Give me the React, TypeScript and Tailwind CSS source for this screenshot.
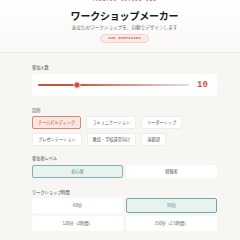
import React from "react";

const purposes = [
  "チームビルディング",
  "コミュニケーション",
  "リーダーシップ",
  "プレゼンテーション",
  "教員・学校運営向け",
  "演劇部",
];

const levels = ["初心者", "経験者"];
const durations = ["60分", "90分", "120分（2時間）", "150分（2.5時間）"];

export default function App() {
  const selectedPurpose = 0;
  const selectedLevel = 0;
  const selectedDuration = 1;

  return (
    <div
      className="w-[240px] h-[240px] overflow-hidden bg-[#f7f6f3] text-[#333]"
      style={{ fontFamily: '"Noto Sans CJK JP", "Noto Sans", sans-serif' }}
    >
      {/* Header */}
      <header className="bg-gradient-to-b from-white to-[#f9f8f6] border-b border-[#ebe8e3] h-[55px] pl-[9px] flex flex-col items-center -mt-[2px]">
        <div className="font-['Liberation_Mono',monospace] text-[4px] leading-[5px] tracking-[0.3em] text-[#c0574a] font-bold">
          THEATER METHOD LAB
        </div>
        <h1 className="mt-[7px] text-[10px] leading-[12px] font-bold text-[#1a1a1a] tracking-[-0.02em]">
          ワークショップメーカー
        </h1>
        <p className="mt-[2px] text-[4.6px] leading-[6px] text-[#666]">
          あなたのワークショップを、自動でデザインします
        </p>
        <span className="mt-[4px] px-[7px] h-[9px] flex items-center rounded-full bg-[#fbebe7] border border-[#f3d3cc] font-['Liberation_Mono',monospace] text-[4.2px] font-bold text-[#c0574a]">
          131 exercises
        </span>
      </header>

      <main className="pl-[32px] pr-[23px] pt-[12px] flex flex-col">
        {/* Participants */}
        <div className="text-[4.2px] leading-[5px] text-[#444]">参加人数</div>
        <div className="mt-[4px] h-[22px] bg-white rounded-[2px] flex items-center pl-[6px] pr-[8px] gap-[8px]">
          <div className="relative flex-1 h-[1.5px] rounded-full bg-gradient-to-r from-[#c8533f] from-[26%] to-[#dcdcdc] to-[98%]">
            <div className="absolute top-1/2 left-[26%] -translate-x-1/2 -translate-y-1/2 w-[5px] h-[5px] rounded-full bg-[#c8533f] ring-1 ring-[#f3cfc6]" />
          </div>
          <span className="w-[12px] font-['Liberation_Mono',monospace] text-[9px] leading-[10px] font-bold text-[#c8533f]">
            10
          </span>
        </div>

        {/* Purpose */}
        <div className="mt-[12px] text-[4.2px] leading-[5px] text-[#444]">目的</div>
        <div className="mt-[3px] flex flex-wrap gap-x-[5px] gap-y-[4px]">
          {purposes.map((p, i) => (
            <span
              key={p}
              className={
                i === selectedPurpose
                  ? "h-[13px] px-[5px] flex items-center rounded-[2px] border border-[#d98878] bg-[#fbe6e1] text-[4.2px] text-[#b4503f]"
                  : "h-[13px] px-[5px] flex items-center rounded-[2px] border border-[#efede9] bg-white text-[4.2px] text-[#555]"
              }
            >
              {p}
            </span>
          ))}
        </div>

        {/* Level */}
        <div className="mt-[10px] text-[4.2px] leading-[5px] text-[#444]">参加者レベル</div>
        <div className="mt-[4px] grid grid-cols-2 gap-[3px]">
          {levels.map((l, i) => (
            <div
              key={l}
              className={
                i === selectedLevel
                  ? "h-[13px] flex items-center justify-center rounded-[2px] border border-[#7fb3b2] bg-[#e8f2f1] text-[4.2px] text-[#3f8785]"
                  : "h-[13px] flex items-center justify-center rounded-[2px] border border-transparent bg-white text-[4.2px] text-[#555]"
              }
            >
              {l}
            </div>
          ))}
        </div>

        {/* Duration */}
        <div className="mt-[12px] text-[4.2px] leading-[5px] text-[#444]">ワークショップ時間</div>
        <div className="mt-[3px] grid grid-cols-2 gap-[3px]">
          {durations.map((d, i) => (
            <div
              key={d}
              className={
                i === selectedDuration
                  ? "h-[15px] flex items-center justify-center rounded-[2px] border-[1.5px] border-[#6fa9a7] bg-[#e8f2f1] text-[4.2px] text-[#3f8785]"
                  : "h-[15px] flex items-center justify-center rounded-[2px] border border-transparent bg-white text-[4.2px] text-[#555]"
              }
            >
              {d}
            </div>
          ))}
        </div>
      </main>
    </div>
  );
}
